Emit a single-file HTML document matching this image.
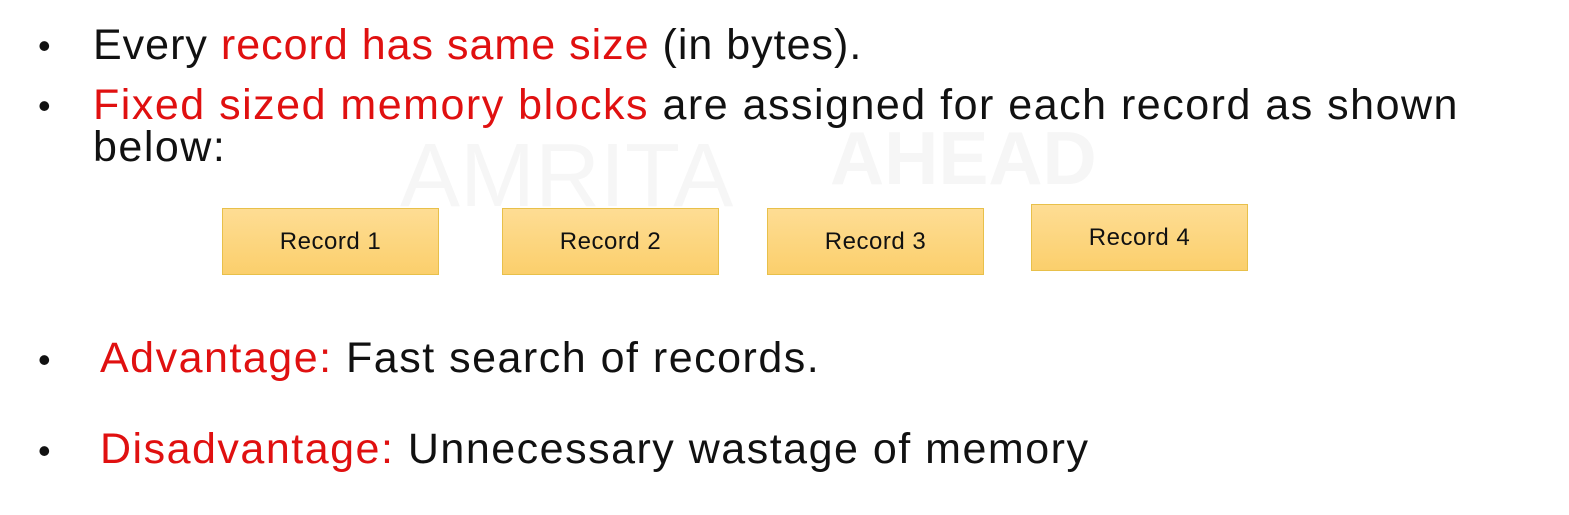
<!DOCTYPE html>
<html><head><meta charset="utf-8"><style>
body{margin:0;width:1569px;height:515px;background:#fff;overflow:hidden;position:relative;font-family:"Liberation Sans",sans-serif;color:#111;}
.t{position:absolute;font-size:43px;letter-spacing:1.5px;white-space:nowrap;line-height:1;}
.r{color:#e01010;}
.b{position:absolute;font-size:36px;left:38px;}
.box{position:absolute;width:215px;height:65px;border:1px solid #e8c04a;background:linear-gradient(#fedd94,#fbcf6c);font-size:24px;letter-spacing:0.5px;display:flex;align-items:center;justify-content:center;color:#111;}
.wm{position:absolute;color:#f6f6f6;font-size:90px;white-space:nowrap;}
</style></head><body>
<div class="wm" style="left:400px;top:125px;">AMRITA</div>
<div class="wm" style="left:830px;top:115px;font-weight:bold;font-size:75px;">AHEAD</div>
<div class="b" style="top:25px">•</div>
<div class="t" style="left:93px;top:24px;letter-spacing:1px">Every <span class="r">record has same size</span> (in bytes).</div>
<div class="b" style="top:85px">•</div>
<div class="t" style="left:93px;top:84px"><span class="r">Fixed sized memory blocks</span> are assigned for each record as shown</div>
<div class="t" style="left:93px;top:126px">below:</div>
<div class="box" style="left:222px;top:208px">Record 1</div>
<div class="box" style="left:502px;top:208px">Record 2</div>
<div class="box" style="left:767px;top:208px">Record 3</div>
<div class="box" style="left:1031px;top:204px">Record 4</div>
<div class="b" style="top:339px">•</div>
<div class="t" style="left:100px;top:337px"><span class="r">Advantage:</span> Fast search of records.</div>
<div class="b" style="top:430px">•</div>
<div class="t" style="left:100px;top:428px"><span class="r">Disadvantage:</span> Unnecessary wastage of memory</div>
</body></html>
